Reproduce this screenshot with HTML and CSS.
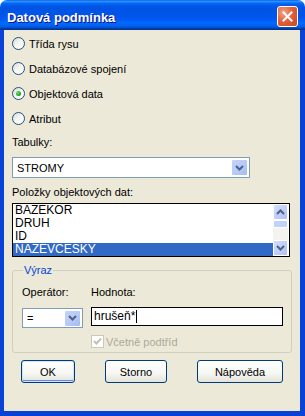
FILE: index.html
```html
<!DOCTYPE html>
<html lang="cs">
<head>
    <meta charset="UTF-8">
    <title>Datová podmínka</title>
    <link rel="stylesheet" href="styles.css">
</head>
<body>
    <div class="window">
        <div class="titlebar">
            <span class="title">Datová podmínka</span>
            <span class="close">
                <svg width="11" height="11" viewBox="0 0 11 11">
                    <path d="M1.5 1.5 L9.5 9.5 M9.5 1.5 L1.5 9.5" stroke="#fff" stroke-width="2" stroke-linecap="square"/>
                </svg>
            </span>
        </div>
        <div class="frame">
            <div class="radios">
                <label class="radio"><span class="circle"></span>Třída rysu</label>
                <label class="radio"><span class="circle"></span>Databázové spojení</label>
                <label class="radio"><span class="circle checked"></span>Objektová data</label>
                <label class="radio"><span class="circle"></span>Atribut</label>
            </div>

            <div class="label">Tabulky:</div>
            <div class="combo combo-wide">
                <span class="combo-value">STROMY</span>
                <span class="combo-arrow">
                    <svg width="9" height="6" viewBox="0 0 9 6"><path d="M1 1 L4.5 4.5 L8 1" fill="none" stroke="#4D6185" stroke-width="2"/></svg>
                </span>
            </div>

            <div class="label">Položky objektových dat:</div>
            <div class="listbox">
                <ul class="items">
                    <li>BAZEKOR</li>
                    <li>DRUH</li>
                    <li>ID</li>
                    <li class="selected">NAZEVCESKY</li>
                </ul>
                <div class="scrollbar">
                    <span class="sb-btn">
                        <svg width="9" height="6" viewBox="0 0 9 6"><path d="M1 5 L4.5 1.5 L8 5" fill="none" stroke="#4D6185" stroke-width="2"/></svg>
                    </span>
                    <span class="sb-thumb"></span>
                    <span class="sb-track"></span>
                    <span class="sb-btn">
                        <svg width="9" height="6" viewBox="0 0 9 6"><path d="M1 1 L4.5 4.5 L8 1" fill="none" stroke="#4D6185" stroke-width="2"/></svg>
                    </span>
                </div>
            </div>

            <fieldset class="group">
                <legend>Výraz</legend>
                <div class="expr">
                    <div class="col-op">
                        <div class="label">Operátor:</div>
                        <div class="combo combo-small">
                            <span class="combo-value">=</span>
                            <span class="combo-arrow">
                                <svg width="9" height="6" viewBox="0 0 9 6"><path d="M1 1 L4.5 4.5 L8 1" fill="none" stroke="#4D6185" stroke-width="2"/></svg>
                            </span>
                        </div>
                    </div>
                    <div class="col-val">
                        <div class="label">Hodnota:</div>
                        <div class="textbox">hrušeň*<span class="caret"></span></div>
                        <label class="check disabled">
                            <span class="box">
                                <svg width="9" height="9" viewBox="0 0 9 9"><path d="M1 4 L3.5 6.5 L8 1.5" fill="none" stroke="#C5C2B2" stroke-width="2"/></svg>
                            </span>
                            Včetně podtříd
                        </label>
                    </div>
                </div>
            </fieldset>

            <div class="buttons">
                <button class="btn btn-default btn-ok">OK</button>
                <button class="btn btn-storno">Storno</button>
                <button class="btn btn-help">Nápověda</button>
            </div>
        </div>
    </div>
</body>
</html>
```

FILE: styles.css
```css
:root {
    --face: #ECE9D8;
    --frame: #0842D6;
    --field-border: #7F9DB9;
    --select: #316AC5;
    --group-title: #0046D5;
}

body {
    margin: 0;
    font-family: 'Liberation Sans', Arial, sans-serif;
    font-size: 11px;
    color: #000;
    background: #fff;
}

.window {
    width: 305px;
    height: 416px;
    display: flex;
    flex-direction: column;
}

.titlebar {
    height: 30px;
    flex: none;
    box-sizing: border-box;
    display: flex;
    align-items: center;
    justify-content: space-between;
    padding: 3px 7px 0 7px;
    border-radius: 7px 7px 0 0;
    background: linear-gradient(to bottom, #0058ee 0%, #3593ff 4%, #288eff 6%, #127dff 8%, #036ffc 10%, #0262ee 14%, #0057e5 20%, #0054e3 24%, #0055eb 56%, #005bf5 66%, #026afe 76%, #0062ef 86%, #0052d6 92%, #0040ab 94%, #003092 100%);
}

.title {
    color: #fff;
    font-weight: bold;
    font-size: 13px;
    text-shadow: 1px 1px #0F1089;
    padding-top: 1px;
}

.close {
    width: 19px;
    height: 19px;
    display: flex;
    align-items: center;
    justify-content: center;
    border: 1px solid #fff;
    border-radius: 3px;
    background: radial-gradient(circle at 30% 30%, #F1A68E 0%, #E2623C 45%, #C6461C 100%);
}

.frame {
    flex: 1;
    background: var(--face);
    border: solid var(--frame);
    border-width: 0 5px 5px 4px;
    padding: 1px 8px 0 8px;
}

/* radio buttons */
.radio {
    height: 25px;
    display: flex;
    align-items: center;
    gap: 4px;
}

.circle {
    width: 11px;
    height: 11px;
    border: 1px solid #1C5180;
    border-radius: 50%;
    background: linear-gradient(135deg, #DCDBD3 0%, #F6F6F4 50%, #fff 100%);
    display: flex;
    align-items: center;
    justify-content: center;
}

.circle.checked::after {
    content: '';
    width: 5px;
    height: 5px;
    border-radius: 50%;
    background: radial-gradient(circle at 35% 35%, #7AE27A 0%, #21A121 60%, #168016 100%);
}

.label {
    line-height: 13px;
    margin-top: 5px;
}

/* combo boxes */
.combo {
    height: 19px;
    border: 1px solid var(--field-border);
    background: #fff;
    display: flex;
    align-items: center;
    justify-content: space-between;
    margin-top: 8px;
}

.combo-wide {
    width: 236px;
}

.combo-value {
    padding-left: 4px;
}

.combo-arrow {
    width: 15px;
    height: 15px;
    margin-right: 1px;
    border: 1px solid #fff;
    border-radius: 2px;
    background: linear-gradient(135deg, #C6D3F7 0%, #B4C8F6 60%, #A5BBEF 100%);
    display: flex;
    align-items: center;
    justify-content: center;
}

.combo-wide + .label {
    margin-top: 8px;
}

/* list box */
.listbox {
    height: 52px;
    margin: 4px 2px 0 0;
    border: 1px solid #000;
    background: #fff;
    display: flex;
}

.items {
    flex: 1;
    list-style: none;
    margin: 0;
    padding: 0;
    font-size: 12px;
}

.items li {
    height: 13px;
    line-height: 13px;
    padding-left: 2px;
}

.items li.selected {
    background: var(--select);
    color: #fff;
}

.scrollbar {
    width: 15px;
    margin-right: 1px;
    display: flex;
    flex-direction: column;
    background: #F4F3EE;
}

.sb-btn {
    height: 14px;
    border: 1px solid #fff;
    border-radius: 2px;
    background: linear-gradient(135deg, #D2DEFC 0%, #BCCDF8 60%, #ADC1F2 100%);
    display: flex;
    align-items: center;
    justify-content: center;
}

.sb-thumb {
    height: 6px;
    border: 1px solid #fff;
    border-radius: 2px;
    background: #C1D2F9;
}

.sb-track {
    flex: 1;
}

/* expression group */
.group {
    margin: 7px 0 0 0;
    padding: 9px 8px 4px 9px;
    border: 1px solid #D0D0BF;
    border-radius: 3px;
    min-width: 0;
}

.group legend {
    color: var(--group-title);
    padding: 0 1px;
    margin-left: 1px;
    line-height: 13px;
}

.group .label {
    margin-top: 0;
}

.expr {
    display: flex;
    gap: 8px;
}

.combo-small {
    width: 59px;
    height: 18px;
    margin-top: 9px;
}

.col-val {
    flex: 1;
}

.textbox {
    height: 17px;
    margin-top: 8px;
    border: 1px solid #000;
    background: #fff;
    padding-left: 2px;
    font-size: 12px;
    line-height: 17px;
    display: flex;
    align-items: center;
}

.caret {
    width: 1px;
    height: 13px;
    margin-left: 1px;
    background: #000;
}

.check {
    margin-top: 9px;
    display: flex;
    align-items: center;
    gap: 2px;
    height: 13px;
}

.check.disabled {
    color: #ACA899;
}

.box {
    width: 11px;
    height: 11px;
    border: 1px solid #CAC8BB;
    background: #fff;
    display: flex;
    align-items: center;
    justify-content: center;
}

/* dialog buttons */
.buttons {
    margin-top: 7px;
    padding-left: 9px;
    display: flex;
    gap: 30px;
}

.btn {
    height: 23px;
    font-family: inherit;
    font-size: 11px;
    color: #000;
    border: 1px solid #003C74;
    border-radius: 3px;
    background: linear-gradient(to bottom, #fff 0%, #F6F6F2 60%, #E3E2DA 100%);
    padding: 0;
}

.btn-default {
    box-shadow: inset 0 0 0 1px #CEE7FF, inset 0 -1px 0 1px #6982EE;
}

.btn-ok {
    width: 54px;
}

.btn-storno {
    width: 62px;
}

.btn-help {
    width: 86px;
}
```
